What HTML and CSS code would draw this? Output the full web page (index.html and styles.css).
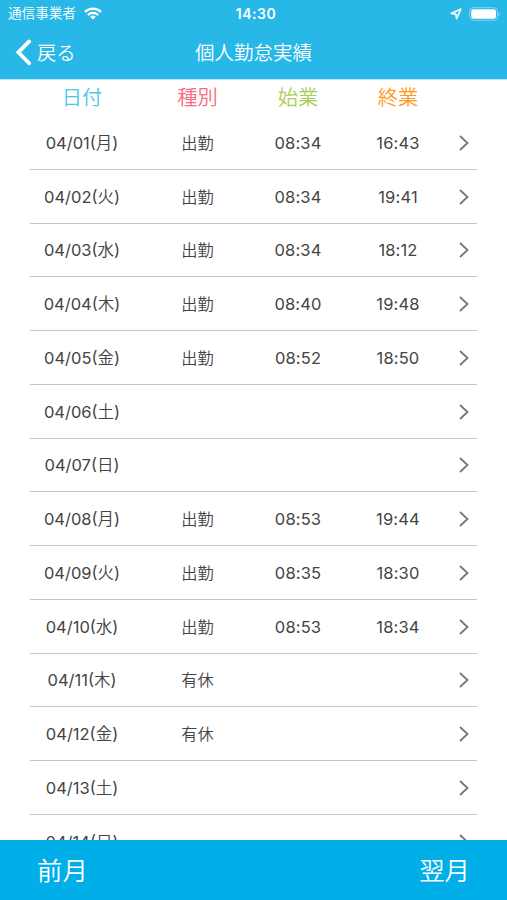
FILE: index.html
```html
<!DOCTYPE html>
<html lang="ja">
<head>
<meta charset="utf-8">
<title>個人勤怠実績</title>
<link rel="stylesheet" href="styles.css">
</head>
<body>
<div class="app">
  <header class="top">
    <div class="status">
      <div class="carrier"><span>通信事業者</span>
        <svg class="wifi" width="18" height="13" viewBox="0 0 18 13"><g fill="none" stroke="#fff" stroke-width="2.3"><path d="M1 4.9a11.4 11.4 0 0 1 16 0"/><path d="M3.9 8a7.3 7.3 0 0 1 10.2 0"/></g><path d="M9 12.6 6.2 9.8a4 4 0 0 1 5.6 0Z" fill="#fff"/></svg>
      </div>
      <div class="clock">14:30</div>
      <div class="power">
        <svg width="12" height="12" viewBox="0 0 12 12"><path d="M10.9 1.1 1.2 5.5 5.9 6.1 6.6 10.8Z" fill="none" stroke="#fff" stroke-width="1.6" stroke-linejoin="round"/></svg>
        <svg width="32" height="14" viewBox="0 0 32 14"><rect x=".7" y=".7" width="27.8" height="12.6" rx="3.6" fill="none" stroke="#86d4f1" stroke-width="1"/><rect x="2.2" y="2.2" width="24.8" height="9.6" rx="2.2" fill="#fff"/><path d="M29.6 4.7q2 2.3 0 4.6Z" fill="#a2def5"/></svg>
      </div>
    </div>
    <nav class="nav">
      <a class="back"><svg width="17" height="27" viewBox="0 0 17 27"><path d="M14.1 2.4 3.4 13.3 14.1 24.3" fill="none" stroke="#fff" stroke-width="3.8" stroke-linecap="round" stroke-linejoin="miter"/></svg><span>戻る</span></a>
      <h1 class="title">個人勤怠実績</h1>
    </nav>
  </header>
  <main class="list">
    <div class="heads"><span class="date">日付</span><span class="kind">種別</span><span class="start">始業</span><span class="end">終業</span></div>
    <div class="row"><span>04/01(<i>月</i>)</span><span>出勤</span><span>08:34</span><span>16:43</span><svg class="chev" viewBox="0 0 10 16"><path d="M1 1 8.5 8 1 15"/></svg></div>
    <div class="row"><span>04/02(<i>火</i>)</span><span>出勤</span><span>08:34</span><span>19:41</span><svg class="chev" viewBox="0 0 10 16"><path d="M1 1 8.5 8 1 15"/></svg></div>
    <div class="row"><span>04/03(<i>水</i>)</span><span>出勤</span><span>08:34</span><span>18:12</span><svg class="chev" viewBox="0 0 10 16"><path d="M1 1 8.5 8 1 15"/></svg></div>
    <div class="row"><span>04/04(<i>木</i>)</span><span>出勤</span><span>08:40</span><span>19:48</span><svg class="chev" viewBox="0 0 10 16"><path d="M1 1 8.5 8 1 15"/></svg></div>
    <div class="row"><span>04/05(<i>金</i>)</span><span>出勤</span><span>08:52</span><span>18:50</span><svg class="chev" viewBox="0 0 10 16"><path d="M1 1 8.5 8 1 15"/></svg></div>
    <div class="row"><span>04/06(<i>土</i>)</span><span></span><span></span><span></span><svg class="chev" viewBox="0 0 10 16"><path d="M1 1 8.5 8 1 15"/></svg></div>
    <div class="row"><span>04/07(<i>日</i>)</span><span></span><span></span><span></span><svg class="chev" viewBox="0 0 10 16"><path d="M1 1 8.5 8 1 15"/></svg></div>
    <div class="row"><span>04/08(<i>月</i>)</span><span>出勤</span><span>08:53</span><span>19:44</span><svg class="chev" viewBox="0 0 10 16"><path d="M1 1 8.5 8 1 15"/></svg></div>
    <div class="row"><span>04/09(<i>火</i>)</span><span>出勤</span><span>08:35</span><span>18:30</span><svg class="chev" viewBox="0 0 10 16"><path d="M1 1 8.5 8 1 15"/></svg></div>
    <div class="row"><span>04/10(<i>水</i>)</span><span>出勤</span><span>08:53</span><span>18:34</span><svg class="chev" viewBox="0 0 10 16"><path d="M1 1 8.5 8 1 15"/></svg></div>
    <div class="row"><span>04/11(<i>木</i>)</span><span>有休</span><span></span><span></span><svg class="chev" viewBox="0 0 10 16"><path d="M1 1 8.5 8 1 15"/></svg></div>
    <div class="row"><span>04/12(<i>金</i>)</span><span>有休</span><span></span><span></span><svg class="chev" viewBox="0 0 10 16"><path d="M1 1 8.5 8 1 15"/></svg></div>
    <div class="row"><span>04/13(<i>土</i>)</span><span></span><span></span><span></span><svg class="chev" viewBox="0 0 10 16"><path d="M1 1 8.5 8 1 15"/></svg></div>
    <div class="row"><span>04/14(<i>日</i>)</span><span></span><span></span><span></span><svg class="chev" viewBox="0 0 10 16"><path d="M1 1 8.5 8 1 15"/></svg></div>
  </main>
  <footer class="months"><a>前月</a><a>翌月</a></footer>
</div>
</body>
</html>
```
FILE: styles.css
```css
* { box-sizing: border-box; }
body {
  margin: 0;
  background: #fff;
  color: #444;
  font-family: Inter, "Noto Sans CJK JP", sans-serif;
  font-weight: 350;
}
.app {
  display: flex;
  flex-direction: column;
  width: 507px;
  height: 900px;
  overflow: hidden;
}
.top {
  flex: none;
  height: 80px;
  border-bottom: 1px solid #b5e8f8;
  background: #27b8e8;
  color: #fff;
}
.status {
  display: grid;
  grid-template-columns: 1fr auto 1fr;
  align-items: center;
  height: 27px;
  padding: 0 6px 0 8px;
}
.carrier {
  display: flex;
  align-items: center;
  gap: 8px;
  font-size: 13.6px;
  line-height: 25px;
}
.clock {
  padding-left: 3px;
  font-size: 14px;
  font-weight: 600;
  letter-spacing: .5px;
  line-height: 27px;
}
.power {
  display: flex;
  justify-content: flex-end;
  align-items: center;
  gap: 7px;
}
.nav {
  display: grid;
  grid-template-columns: 1fr auto 1fr;
  align-items: center;
  height: 51px;
  padding: 0 15px;
}
.back {
  display: flex;
  align-items: center;
  gap: 5px;
  font-size: 19.3px;
  line-height: 30px;
}
.title {
  margin: 0;
  font-size: 19.5px;
  font-weight: 350;
  line-height: 30px;
}
.list {
  flex: 1;
  min-height: 0;
  overflow: hidden;
  padding: 0 30px;
}
.heads, .row {
  display: grid;
  grid-template-columns: 104px 127px 74px 126px 16px;
  align-items: center;
  text-align: center;
}
.heads {
  height: 36px;
  font-size: 20.3px;
  line-height: 30px;
}
.date { color: #4fc5ed; }
.kind { color: #fa6980; }
.start { color: #a5cf58; }
.end { color: #ff981c; }
.row {
  height: 53.75px;
  padding-top: 1px;
  border-bottom: 1.5px solid #cbc5b3;
  font-size: 16.5px;
  font-weight: 400;
  line-height: 24px;
}
.row span { white-space: nowrap; }
.row i { font-style: normal; font-weight: 350; }
.row span:nth-child(2) { font-size: 16.2px; font-weight: 350; }
.row span:nth-child(n+3) { letter-spacing: .15px; }
.chev {
  width: 10px;
  height: 16px;
  margin-left: -2px;
  fill: none;
  stroke: #777;
  stroke-width: 1.8;
}
.months {
  flex: none;
  display: flex;
  justify-content: space-between;
  align-items: center;
  height: 60px;
  padding: 1px 37px 0;
  background: #00aee8;
  color: #fff;
  font-size: 25.4px;
  line-height: 38px;
}
```
